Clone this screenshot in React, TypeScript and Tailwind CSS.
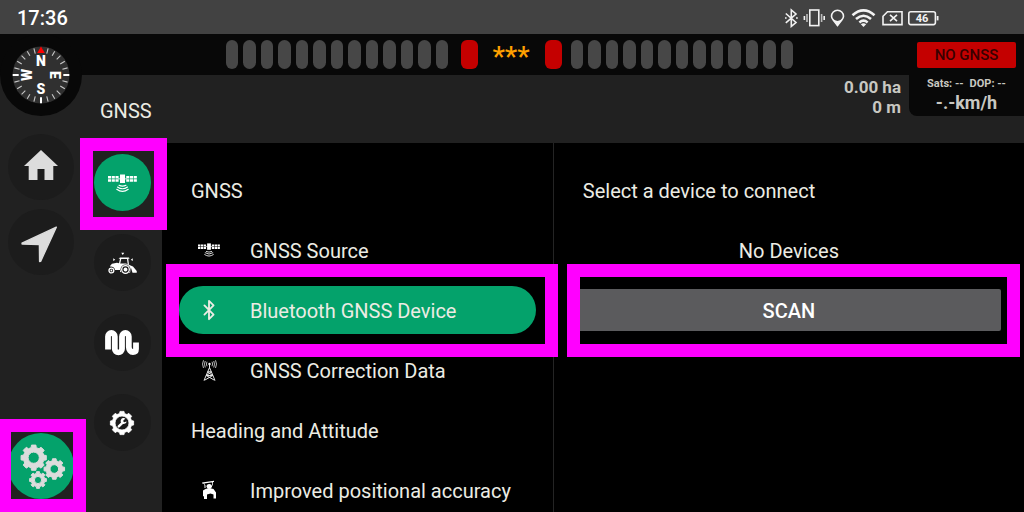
import React, { useState } from 'react';
import { Bluetooth } from 'lucide-react';

const BARS = Array.from({ length: 13 }, (_, i) => i);

// Closed outline of a gear with square-ish teeth
function gearPath(cx: number, cy: number, outer: number, inner: number, teeth = 8) {
  const step = (Math.PI * 2) / teeth;
  const points: string[] = [];
  for (let i = 0; i < teeth; i++) {
    const a = i * step - Math.PI / 2;
    const corners = [
      [inner, -0.32],
      [outer, -0.22],
      [outer, 0.22],
      [inner, 0.32],
    ];
    corners.forEach(([r, f]) => {
      points.push(`${(cx + r * Math.cos(a + f * step)).toFixed(2)} ${(cy + r * Math.sin(a + f * step)).toFixed(2)}`);
    });
  }
  return `M${points.join('L')}Z`;
}

function circlePath(cx: number, cy: number, r: number) {
  return `M${cx - r} ${cy}a${r} ${r} 0 1 0 ${r * 2} 0a${r} ${r} 0 1 0 ${-r * 2} 0Z`;
}

function Compass() {
  return (
    <svg viewBox="0 0 82 82" className="size-[82px]" role="img" aria-label="Compass">
      <circle cx="41" cy="41" r="41" fill="#080808" />
      <circle cx="41" cy="41" r="28.5" fill="#303030" />
      {Array.from({ length: 24 }, (_, i) => i)
        .filter((i) => i !== 0)
        .map((i) => (
          <path
            key={i}
            d={i % 6 === 0 ? 'M41 12.7V18.7' : 'M41 13.5V18.8'}
            stroke={i % 6 === 0 ? '#fff' : '#c9c9c9'}
            strokeWidth={i % 6 === 0 ? 2 : 1.1}
            transform={`rotate(${i * 15} 41 41)`}
          />
        ))}
      <path d="M41 12.5L44.8 19H37.2Z" fill="#f00" />
      <g fill="#fff" fontFamily="Roboto, sans-serif" fontWeight="900" fontSize="14" textAnchor="middle">
        <text x="41" y="31.8">N</text>
        <text x="41" y="31.8" transform="rotate(90 41 41)">E</text>
        <text x="41" y="60.3">S</text>
        <text x="41" y="31.8" transform="rotate(-90 41 41)">W</text>
      </g>
    </svg>
  );
}

function HomeIcon() {
  return (
    <svg viewBox="0 0 66 66" className="size-full" fill="#dcdcdc">
      <path d="M33 16L50 32H45.3V46H36.5V35H29.5V46H20.7V32H16Z" />
    </svg>
  );
}

function NavigateIcon() {
  return (
    <svg viewBox="0 0 66 66" className="size-full" fill="#dcdcdc" stroke="#dcdcdc" strokeWidth="1.4" strokeLinejoin="round">
      <path d="M48.3 18.2L14 34.2L14.2 35L31.4 35.6L31.6 52.6L32.6 52.4Z" />
    </svg>
  );
}

function GearsIcon() {
  return (
    <svg viewBox="0 0 66 66" className="size-full" fill="#dcdcdc" stroke="#dcdcdc" strokeWidth="1" strokeLinejoin="round" fillRule="evenodd">
      <path d={gearPath(25.7, 24.7, 12.8, 10.4) + circlePath(25.7, 24.7, 5.6)} />
      <path d={gearPath(46.3, 36, 10.4, 8.4) + circlePath(46.3, 36, 4.3)} />
      <path d={gearPath(30, 47, 8.5, 6.8) + circlePath(30, 47, 3.6)} />
    </svg>
  );
}

function SatelliteIcon({ className }: { className: string }) {
  return (
    <svg viewBox="0 0 58 36" className={className} fill="#fff">
      {[0, 7.5, 15, 36.5, 44, 51.5].map((x) => (
        <path key={x} d={`M${x} 4h6.2v5.2h-6.2ZM${x} 10.4h6.2v5.2h-6.2Z`} />
      ))}
      <rect x="20" y="9" width="18" height="1.6" />
      <rect x="24" y="1" width="10" height="17" />
      <g fill="none" stroke="#fff" strokeWidth="2.2" strokeLinecap="round">
        <path d="M22 22.5Q29 26 36 22.5" />
        <path d="M19 26Q29 33 39 26" />
        <path d="M17.5 30.5Q29 39 40.5 30.5" />
      </g>
    </svg>
  );
}

function TractorIcon() {
  return (
    <svg viewBox="0 0 58 44" className="w-[29px]" fill="#fff">
      <path d="M26.5 1.5h6L29.5 6ZM10.5 12.5l4 3-4 2.5ZM49.5 12.5l-4 3 4 2.5Z" />
      <path d="M21 13.5L24 11H42L43 13.5H40.5L42 25.5H39.5L38 14H26.5L24 25H21.5L24 13.5Z" />
      <path d="M4 28L8 23.5L18 21.5L24 23L36 23L44 26.5L50 29L57.5 38V41.5H49L46 32L44 42L24 40V36H13Q12 28 4 29Z" />
      <circle cx="6.8" cy="37" r="7.2" fill="#1c1c1c" />
      <circle cx="6.8" cy="37" r="4.8" fill="none" stroke="#fff" strokeWidth="2.6" />
      <circle cx="6.8" cy="37" r="1.8" />
      <circle cx="35" cy="35" r="10" fill="#1c1c1c" />
      <circle cx="35" cy="35" r="7.6" fill="none" stroke="#fff" strokeWidth="2.6" />
      <circle cx="35" cy="35" r="3.8" />
    </svg>
  );
}

function SwathIcon() {
  return (
    <svg viewBox="0 0 34 26" className="w-[34px]" fill="none" stroke="#fff" strokeWidth="5.8">
      <path d="M3 19.5V6.4a3.4 3.4 0 0 1 6.8 0V19a3.6 3.4 0 0 0 7.2 0V6.4a3.4 3.4 0 0 1 6.8 0V17a4.2 5 0 0 0 4.2 5Q31 22 31 19V12.5" />
    </svg>
  );
}

function GearWrenchIcon() {
  return (
    <svg viewBox="0 0 26 26" className="size-[26px]">
      <path
        d={gearPath(13, 13, 11.8, 9.8) + circlePath(13, 13, 7)}
        fill="#fff"
        fillRule="evenodd"
        stroke="#fff"
        strokeWidth="0.8"
        strokeLinejoin="round"
      />
      <path d="M9.8 16.4L13.4 12.8" stroke="#fff" strokeWidth="2.4" strokeLinecap="round" />
      <path d="M16.4 8.6A3 3 0 1 0 17.6 11.4L15.2 12.2L14 11Z" fill="#fff" />
    </svg>
  );
}

function TowerIcon() {
  return (
    <svg viewBox="0 0 30 42" className="w-[15px]" fill="none" stroke="#e6e6e6" strokeWidth="1.6">
      <circle cx="15" cy="8" r="2.4" fill="#fff" stroke="none" />
      <path d="M10 3.5Q7.6 8 10 12.5M6.5 2Q3.4 8 6.5 15M3 .5Q-1 8 3 16M20 3.5Q22.4 8 20 12.5M23.5 2Q26.6 8 23.5 15M27 .5Q31 8 27 16" />
      <path d="M15 9V17M15 15L4 41M15 15L26 41M11.5 23.5H18.5M8.5 31H21.5M11 24L21.5 31L5 40.5M19 24L8.5 31L25 40.5" strokeWidth="2" />
    </svg>
  );
}

function OperatorIcon() {
  return (
    <svg viewBox="0 0 32 40" className="w-4" fill="#fff">
      <path d="M2 5L26 1.5V4L3 7.5ZM6 6L9 11V16H7V12ZM24 4V11H22.5V4Z" />
      <path d="M11 13Q11 8 16.5 8Q22 8 22 13Q21 18 16.5 18Q12 18 11 13Z" />
      <path d="M9 18Q16 15 25 18L30 25V37H25V29L19 27L12 29L12 38H6V33L4 32V21Z" />
    </svg>
  );
}

function StatusIcons() {
  return (
    <svg viewBox="0 0 156 20" className="h-5 w-[156px]" fill="none" stroke="#f2f2f2" strokeWidth="1.6" role="img" aria-label="Device status, battery 46 percent">
      {/* bluetooth */}
      <path d="M1.8 5.5L12 14.5L7.3 18.4V2L12 6L1.8 14.8" />
      <path d="M1 10h1.6M12 10h1.8" />
      {/* vibrate */}
      <rect x="25.8" y="2" width="9" height="15.6" />
      <path d="M23 6v8M37.6 6v8" stroke="#bcbcbc" />
      <path d="M20.4 8v4M40.2 8v4" />
      {/* location */}
      <path d="M53.5 17.5L49.2 12Q47.5 9.8 47.5 8.2A6 6 0 0 1 59.5 8.2Q59.5 9.8 57.8 12Z" />
      <path d="M48.6 10.8Q53.5 15 58.4 10.8L53.5 18.5Z" fill="#f2f2f2" stroke="none" />
      {/* wifi */}
      <path d="M68.5 7.2Q79.5-2.5 90.5 7.2M72 11Q79.5 4.5 87 11M75.4 14.4Q79.5 11 83.6 14.4" strokeWidth="2.6" />
      <path d="M76.8 16.2Q79.5 14.2 82.2 16.2L79.5 19Z" fill="#f2f2f2" stroke="none" />
      {/* no sim */}
      <path d="M103.5 3.8H118V16.6H99V8.3Z" />
      <path d="M106 6.8L113 13.2M113 6.8L106 13.2" />
      {/* battery */}
      <rect x="124.8" y="3.8" width="26.6" height="12.8" rx="2" />
      <path d="M153.6 8v4.4" strokeWidth="1.8" />
      <text x="138" y="14" fill="#f2f2f2" stroke="none" fontSize="11" fontWeight="700" fontFamily="Roboto, sans-serif" textAnchor="middle">
        46
      </text>
    </svg>
  );
}

// Magenta frame drawn over a control to call attention to it
function Highlight({ className }: { className: string }) {
  return <span aria-hidden="true" className={`pointer-events-none absolute z-20 border-[13px] border-[#ff00ff] ${className}`} />;
}

function LightBars() {
  return (
    <div className="flex gap-[5px]">
      {BARS.map((i) => (
        <span key={i} className={`h-[29px] rounded-full bg-[#474747] ${i % 2 ? 'w-[13px]' : 'w-3'}`} />
      ))}
    </div>
  );
}

const TABS = [
  { label: 'GNSS', icon: <SatelliteIcon className="w-[29px]" /> },
  { label: 'Vehicle', icon: <TractorIcon /> },
  { label: 'Guidance', icon: <SwathIcon /> },
  { label: 'System', icon: <GearWrenchIcon /> },
];

const ITEMS = [
  { heading: true, label: 'GNSS' },
  { label: 'GNSS Source', icon: <SatelliteIcon className="w-[22px]" /> },
  { label: 'Bluetooth GNSS Device', icon: <Bluetooth size={22} /> },
  { label: 'GNSS Correction Data', icon: <TowerIcon /> },
  { heading: true, label: 'Heading and Attitude' },
  { label: 'Improved positional accuracy', icon: <OperatorIcon /> },
];

export default function App() {
  const [tab, setTab] = useState('GNSS');
  const [item, setItem] = useState('Bluetooth GNSS Device');

  return (
    <div className="flex h-screen flex-col overflow-hidden bg-black font-['Roboto',sans-serif] text-[#ecece4]">
      {/* Status bar */}
      <div className="flex h-[34px] shrink-0 items-center justify-between bg-[#424242] pt-px pr-[84px] pl-[17px]">
        <span className="text-xl font-medium text-white">17:36</span>
        <StatusIcons />
      </div>

      {/* Light bar */}
      <header className="relative flex h-[41px] shrink-0 items-start justify-center bg-[#080808] pt-1.5">
        <div className="absolute top-0 left-0 z-10">
          <Compass />
        </div>
        <div className="mr-1.5 flex">
          <LightBars />
          <span className="ml-[13px] h-[29px] w-[17px] rounded-md bg-[#c40000]" />
          <span className="w-[67px] text-center text-[28px] leading-[34px] font-medium text-[#ffa000]">***</span>
          <span className="mr-[9px] h-[29px] w-[17px] rounded-md bg-[#c40000]" />
          <LightBars />
        </div>
        <div className="absolute top-0 right-0 z-10 flex h-[82px] w-[115px] flex-col items-center rounded-bl-lg bg-[#080808] pt-2">
          <div className="flex h-[26px] w-[99px] items-center justify-center rounded-xs bg-[#c40000] text-[15px] font-medium text-[#380000]">
            NO GNSS
          </div>
          <div className="mt-2 flex gap-1.5 text-[11px] leading-4 font-bold text-[#c8c8c2]">
            <span>Sats: --</span>
            <span>DOP: --</span>
          </div>
          <div className="text-lg leading-[22px] font-bold text-[#c8c8c2]">-.-km/h</div>
        </div>
      </header>

      <div className="flex min-h-0 flex-1">
        {/* Main navigation */}
        <nav className="flex w-[82px] shrink-0 flex-col items-center gap-[9px] bg-[#212121] pt-[59px] pb-[13px]">
          <button aria-label="Home" className="size-[66px] rounded-full bg-[#1c1c1c]">
            <HomeIcon />
          </button>
          <button aria-label="Navigate" className="size-[66px] rounded-full bg-[#1c1c1c]">
            <NavigateIcon />
          </button>
          <button aria-label="Settings" className="relative mt-auto size-[66px] rounded-full bg-[#04a26b]">
            <GearsIcon />
            <Highlight className="-top-3.5 -right-3 -bottom-[13px] -left-2.5" />
          </button>
        </nav>

        <div className="flex min-w-0 flex-1 flex-col">
          <div className="flex h-[68px] shrink-0 justify-between bg-[#212121] pr-[123px] pl-[18px]">
            <h1 className="self-center pt-1 text-xl">GNSS</h1>
            <div className="pt-0.5 text-right text-[17px] leading-5 font-bold text-[#c8c8c2]">
              <div>0.00 ha</div>
              <div>0 m</div>
            </div>
          </div>

          <div className="flex min-h-0 flex-1">
            {/* Settings tabs */}
            <nav className="flex w-20 shrink-0 flex-col items-center gap-[23px] bg-[#212121] pt-[11px]">
              {TABS.map((t) => (
                <button
                  key={t.label}
                  aria-label={t.label}
                  onClick={() => setTab(t.label)}
                  className={`relative flex size-[57px] shrink-0 items-center justify-center rounded-full ${
                    tab === t.label ? 'bg-[#04a26b]' : 'bg-[#1c1c1c]'
                  }`}
                >
                  {t.icon}
                  {tab === t.label && <Highlight className="-top-4 -right-4 -bottom-[19px] -left-3.5" />}
                </button>
              ))}
            </nav>

            <div className="grid min-w-0 flex-1 grid-cols-[5fr_6fr]">
              {/* Settings list */}
              <section className="flex min-w-0 flex-col gap-3 border-r border-[#242424] px-[17px] pt-[23px]">
                {ITEMS.map((entry) =>
                  entry.heading ? (
                    <h2 key={entry.label} className="flex h-12 shrink-0 items-center pt-0.5 pl-3 text-xl">
                      {entry.label}
                    </h2>
                  ) : (
                    <button
                      key={entry.label}
                      onClick={() => setItem(entry.label)}
                      className={`relative flex h-12 shrink-0 items-center gap-[29px] rounded-full pl-[18px] text-left text-xl whitespace-nowrap ${
                        item === entry.label ? 'bg-[#04a26b]' : ''
                      }`}
                    >
                      <span className="flex w-6 shrink-0 justify-center">{entry.icon}</span>
                      <span className="pt-0.5">{entry.label}</span>
                      {item === entry.label && <Highlight className="-top-[22px] -right-[22px] -bottom-[23px] -left-[13px]" />}
                    </button>
                  ),
                )}
              </section>

              {/* Device picker */}
              <section className="flex min-w-0 flex-col gap-3 px-[23px] pt-[23px]">
                <h2 className="flex h-12 items-center pt-0.5 pl-1.5 text-xl">Select a device to connect</h2>
                <p className="flex h-12 items-center justify-center pt-0.5 text-xl">No Devices</p>
                <button className="relative mt-[3px] h-[42px] rounded-xs bg-[#5b5b5d] pt-0.5 text-xl font-medium text-white">
                  SCAN
                  <Highlight className="-top-[25px] -right-[19px] -bottom-[26px] -left-2.5" />
                </button>
              </section>
            </div>
          </div>
        </div>
      </div>
    </div>
  );
}
